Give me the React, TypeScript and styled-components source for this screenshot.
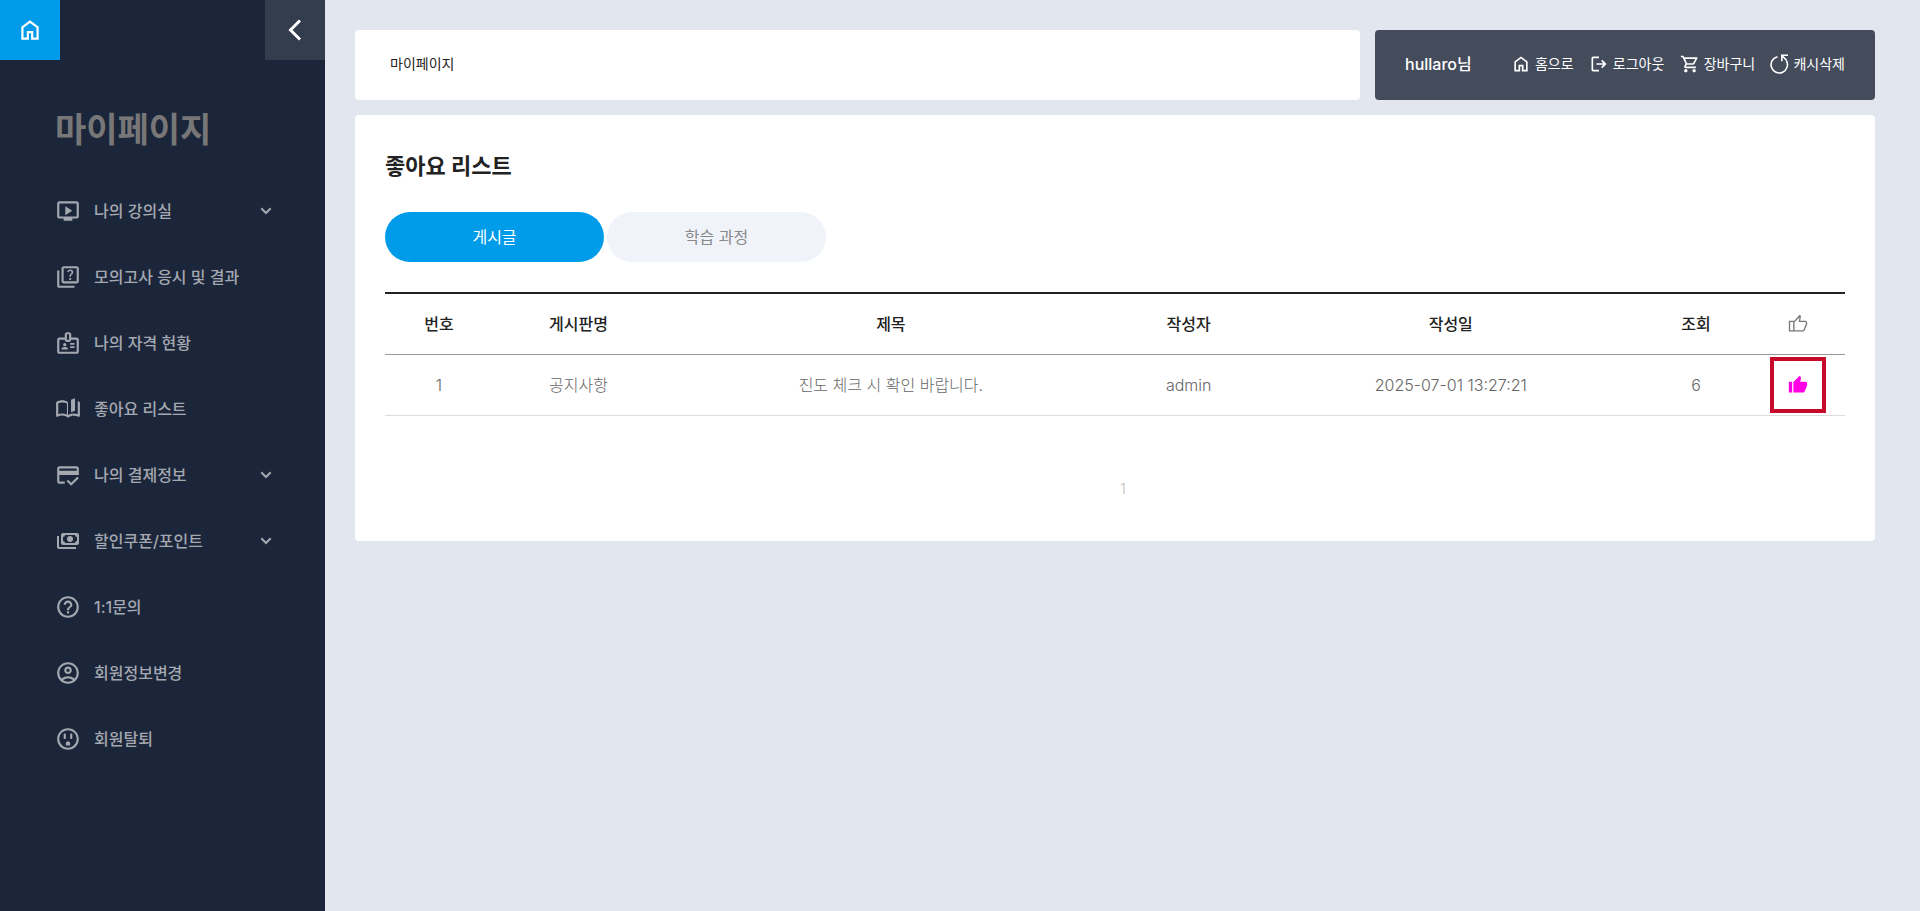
import React from "react";
import styled, { createGlobalStyle, css } from "styled-components";
import {
  MdHelpOutline,
  MdOutlineAccountCircle,
  MdOutlineBadge,
  MdOutlineCreditScore,
  MdOutlineOutlet,
  MdOutlineQuiz,
  MdOutlineShoppingCart,
} from "react-icons/md";

const GlobalStyle = createGlobalStyle`
  *, *::before, *::after { box-sizing: border-box; }
  body {
    margin: 0;
    background: #e1e6ef;
    color: #222;
    font-family: Inter, "Noto Sans CJK KR", sans-serif;
    font-size: 16px;
    line-height: 24px;
  }
  h1, h2, p, ul { margin: 0; padding: 0; }
  ul { list-style: none; }
  a { color: inherit; text-decoration: none; }
  button { font: inherit; border: 0; padding: 0; cursor: pointer; }
  svg { display: block; flex: none; }
`;

const Page = styled.div`
  display: flex;
  min-height: 100vh;
`;

const Sidebar = styled.aside`
  flex: none;
  width: 325px;
  background: #1c263a;
`;

const SidebarTop = styled.div`
  display: flex;
  justify-content: space-between;
`;

const squareTile = css`
  display: flex;
  align-items: center;
  justify-content: center;
  width: 60px;
  height: 60px;
  color: #fff;
`;

const HomeTile = styled.a`
  ${squareTile}
  background: #009ce9;
`;

const CollapseButton = styled.button`
  ${squareTile}
  background: #333d4d;
`;

const SidebarTitle = styled.h1`
  padding: 46px 55px 0;
  color: #777;
  font-size: 34px;
  font-weight: 700;
  line-height: 48px;
`;

const Menu = styled.ul`
  padding: 24px 46px 0 55px;
`;

const MenuLink = styled.a`
  display: grid;
  grid-template-columns: 26px 1fr 26px;
  align-items: center;
  column-gap: 13px;
  height: 66px;
  color: #a4a8b0;
  font-weight: 500;
  white-space: nowrap;

  svg { justify-self: center; }
`;

const Main = styled.main`
  flex: 1;
  min-width: 0;
  padding: 30px 45px 30px 30px;
`;

const TopBar = styled.div`
  display: flex;
  gap: 15px;
  margin-bottom: 15px;
`;

const Breadcrumb = styled.div`
  display: flex;
  align-items: center;
  flex: 1;
  height: 70px;
  padding: 0 35px 2px;
  border-radius: 4px;
  background: #fff;
  font-size: 14px;
`;

const UserBar = styled.nav`
  display: flex;
  align-items: center;
  justify-content: space-between;
  width: 500px;
  padding: 0 30px 2px;
  border-radius: 4px;
  background: #444c5c;
  color: #fff;
  font-size: 14px;
  white-space: nowrap;
`;

const UserName = styled.span`
  margin-right: 24px;
  font-size: 16px;
  font-weight: 500;
`;

const UserLink = styled.a`
  display: flex;
  align-items: center;
  gap: 4px;
`;

const Card = styled.section`
  padding: 31px 30px 39px;
  border-radius: 4px;
  background: #fff;
`;

const CardTitle = styled.h2`
  font-size: 22px;
  font-weight: 700;
  line-height: 40px;
`;

const Tabs = styled.div`
  display: flex;
  gap: 3px;
  margin: 26px 0 30px;
`;

const Tab = styled.button<{ $active?: boolean }>`
  width: 15%;
  height: 50px;
  border-radius: 25px;
  background: ${({ $active }) => ($active ? "#009ce9" : "#f0f3f9")};
  color: ${({ $active }) => ($active ? "#fff" : "#888")};
`;

const Table = styled.table`
  width: 100%;
  border-collapse: collapse;
  border-top: 2px solid #222;
  table-layout: fixed;
  text-align: center;

  th, td {
    height: 61px;
    padding: 0;
  }
  th {
    border-bottom: 1px solid #999;
    font-weight: 500;
  }
  td {
    border-bottom: 1px solid #ddd;
    color: #666;
    font-weight: 300;
  }
`;

const Column = styled.col<{ $width: string }>`
  width: ${({ $width }) => $width};
`;

const HeadIcon = styled.span`
  display: flex;
  justify-content: center;
  color: #777;
`;

const LikeButton = styled.button`
  display: flex;
  align-items: center;
  justify-content: center;
  width: 56px;
  height: 56px;
  margin: 0 auto;
  border: 4px solid #c60a2a;
  background: #fff;
  color: #ff00e6;
`;

const Pagination = styled.nav`
  display: flex;
  justify-content: center;
  margin-top: 60px;
  padding-left: 16px;
  color: #bbb;
  font-size: 14px;
  font-weight: 300;
  line-height: 26px;
`;

type IconProps = { size?: number };

const Icon = ({ size = 26, children }: IconProps & { children: React.ReactNode }) => (
  <svg width={size} height={size} viewBox="0 0 24 24" fill="currentColor" aria-hidden="true">
    {children}
  </svg>
);

const HomeIcon = ({ size }: IconProps) => (
  <Icon size={size}>
    <path d="M6 19h3v-6h6v6h3v-9l-6-4.5L6 10v9Zm-2 2V9l8-6 8 6v12h-7v-6h-2v6H4Z" />
  </Icon>
);

const BackIcon = () => (
  <svg width="14" height="22" viewBox="0 0 14 22" fill="none" stroke="currentColor" strokeWidth="3" aria-hidden="true">
    <path d="M12 1.5 2.5 11 12 20.5" />
  </svg>
);

const ChevronIcon = () => (
  <svg width="12" height="8" viewBox="0 0 12 8" fill="none" stroke="currentColor" strokeWidth="2" aria-hidden="true">
    <path d="m1.300 1.300 4.700 4.700 4.700-4.700" />
  </svg>
);

const LectureIcon = () => (
  <Icon>
    <path d="m9.500 16 6.500-4.200-6.500-4.200V16ZM8 21v-2H4c-1.100 0-2-.9-2-2V5c0-1.100.9-2 2-2h16c1.100 0 2 .9 2 2v12c0 1.100-.9 2-2 2h-4v2H8Zm-4-4h16V5H4v12Z" />
  </Icon>
);

const BookIcon = () => (
  <Icon>
    <path d="M12 20c-1.600-1.200-3.500-1.900-5.500-1.900-1.500 0-2.900.4-4.100 1-.7.3-1.400-.1-1.400-.9V6.200c0-.4.2-.7.5-.9C3.100 4.500 4.800 4 6.500 4c2 0 3.800.5 5.500 1.500v12c1.300-.8 2.700-1.300 4.200-1.400v2.100c-1.500.2-2.900.8-4.200 1.800Zm-1-2.900V6.700C9.600 6.200 8.100 6 6.500 6c-1.200 0-2.400.3-3.500.8v9.900c1.200-.4 2.300-.6 3.500-.6 1.600 0 3.100.4 4.500 1Z" />
    <path d="m14.800 3.500 3.700-1.500v11.500l-3.700 1.500V3.500ZM21 4.700c.5.200 1 .4 1.500.6.300.2.500.5.500.9v12c0 .8-.7 1.200-1.400.9-1.700-.8-3.500-1.100-5.400-.9v-2.100c1.600-.1 3.300.1 4.800.6V4.700Z" />
  </Icon>
);

const CashIcon = () => (
  <Icon size={24}>
    <path
      fillRule="evenodd"
      d="M7 4h14c1.100 0 2 .9 2 2v8c0 1.100-.9 2-2 2H7c-1.100 0-2-.9-2-2V6c0-1.100.9-2 2-2Zm2 2c0 1.100-.9 2-2 2v4c1.100 0 2 .9 2 2h10c0-1.100.9-2 2-2V8c-1.100 0-2-.9-2-2H9Zm5 7a3 3 0 1 1 0-6 3 3 0 0 1 0 6ZM1 7h2v11h17v2H3c-1.100 0-2-.9-2-2V7Z"
    />
  </Icon>
);

const LogoutIcon = () => (
  <Icon size={20}>
    <path d="M5 21c-1.100 0-2-.9-2-2V5c0-1.100.9-2 2-2h7v2H5v14h7v2H5Zm11-4-1.400-1.450L17.150 13H9v-2h8.150L14.600 8.450 16 7l5 5-5 5Z" />
  </Icon>
);

const RefreshIcon = () => (
  <svg width="19" height="20" viewBox="0 0 19 20" fill="none" stroke="currentColor" strokeWidth="1.6" aria-hidden="true">
    <path d="M7.500 2.700A8.200 8.200 0 1 0 16.300 6.500" />
    <path d="M18 1.300h-6.200v6M12.200 1.700l4.300 4.600" />
  </svg>
);

const ThumbOutlineIcon = () => (
  <Icon size={20}>
    <path
      fillRule="evenodd"
      d="M1 8h6.600L14 1l1.600 1.500-1 5.500H21c1.100 0 2 .9 2 2v2.500l-3.200 7.400c-.3.700-1 1.100-1.800 1.100H1V8Zm1.600 1.600v9.800h3.600V9.600H2.600Zm5.200 9.800h10.400l3.200-7.400V9.600h-8.700l1.200-5.600-6.100 6v9.400Z"
    />
  </Icon>
);

const ThumbFilledIcon = () => (
  <Icon size={20}>
    <path d="M1 8h4v13H1zM18 21H6.500V8.500L14 1l1.250 1.250c.12.120.21.280.29.490.08.200.11.400.11.590v.350L14.550 8H21c.53 0 1 .2 1.400.6.400.4.600.870.600 1.400v2c0 .25-.05.500-.15.750l-3 7.050c-.15.330-.4.620-.75.850-.35.230-.72.350-1.100.350Z" />
  </Icon>
);

const menuItems = [
  { label: "나의 강의실", icon: <LectureIcon />, expandable: true },
  { label: "모의고사 응시 및 결과", icon: <MdOutlineQuiz size={26} /> },
  { label: "나의 자격 현황", icon: <MdOutlineBadge size={26} /> },
  { label: "좋아요 리스트", icon: <BookIcon /> },
  { label: "나의 결제정보", icon: <MdOutlineCreditScore size={26} />, expandable: true },
  { label: "할인쿠폰/포인트", icon: <CashIcon />, expandable: true },
  { label: "1:1문의", icon: <MdHelpOutline size={26} /> },
  { label: "회원정보변경", icon: <MdOutlineAccountCircle size={26} /> },
  { label: "회원탈퇴", icon: <MdOutlineOutlet size={26} /> },
];

const userLinks = [
  { label: "홈으로", icon: <HomeIcon size={20} /> },
  { label: "로그아웃", icon: <LogoutIcon /> },
  { label: "장바구니", icon: <MdOutlineShoppingCart size={20} /> },
  { label: "캐시삭제", icon: <RefreshIcon /> },
];

const columns = [
  { label: "번호", width: "7.4%" },
  { label: "게시판명", width: "11.7%" },
  { label: "제목", width: "31.1%" },
  { label: "작성자", width: "9.7%" },
  { label: "작성일", width: "26.2%" },
  { label: "조회", width: "7.4%" },
];

const posts = [
  { id: 1, board: "공지사항", title: "진도 체크 시 확인 바랍니다.", author: "admin", date: "2025-07-01 13:27:21", views: 6 },
];

export default function App() {
  return (
    <>
      <GlobalStyle />
      <Page>
        <Sidebar>
          <SidebarTop>
            <HomeTile href="#" aria-label="홈">
              <HomeIcon size={26} />
            </HomeTile>
            <CollapseButton type="button" aria-label="메뉴 접기">
              <BackIcon />
            </CollapseButton>
          </SidebarTop>
          <SidebarTitle>마이페이지</SidebarTitle>
          <Menu>
            {menuItems.map((item) => (
              <li key={item.label}>
                <MenuLink href="#">
                  {item.icon}
                  <span>{item.label}</span>
                  {item.expandable && <ChevronIcon />}
                </MenuLink>
              </li>
            ))}
          </Menu>
        </Sidebar>
        <Main>
          <TopBar>
            <Breadcrumb>마이페이지</Breadcrumb>
            <UserBar>
              <UserName>hullaro님</UserName>
              {userLinks.map((link) => (
                <UserLink href="#" key={link.label}>
                  {link.icon}
                  {link.label}
                </UserLink>
              ))}
            </UserBar>
          </TopBar>
          <Card>
            <CardTitle>좋아요 리스트</CardTitle>
            <Tabs>
              <Tab type="button" $active>게시글</Tab>
              <Tab type="button">학습 과정</Tab>
            </Tabs>
            <Table>
              <colgroup>
                {columns.map((column) => (
                  <Column key={column.label} $width={column.width} />
                ))}
                <col />
              </colgroup>
              <thead>
                <tr>
                  {columns.map((column) => (
                    <th key={column.label} scope="col">{column.label}</th>
                  ))}
                  <th scope="col" aria-label="좋아요">
                    <HeadIcon><ThumbOutlineIcon /></HeadIcon>
                  </th>
                </tr>
              </thead>
              <tbody>
                {posts.map((post) => (
                  <tr key={post.id}>
                    <td>{post.id}</td>
                    <td>{post.board}</td>
                    <td>{post.title}</td>
                    <td>{post.author}</td>
                    <td>{post.date}</td>
                    <td>{post.views}</td>
                    <td>
                      <LikeButton type="button" aria-label="좋아요 취소">
                        <ThumbFilledIcon />
                      </LikeButton>
                    </td>
                  </tr>
                ))}
              </tbody>
            </Table>
            <Pagination aria-label="페이지">
              <a href="#">1</a>
            </Pagination>
          </Card>
        </Main>
      </Page>
    </>
  );
}
